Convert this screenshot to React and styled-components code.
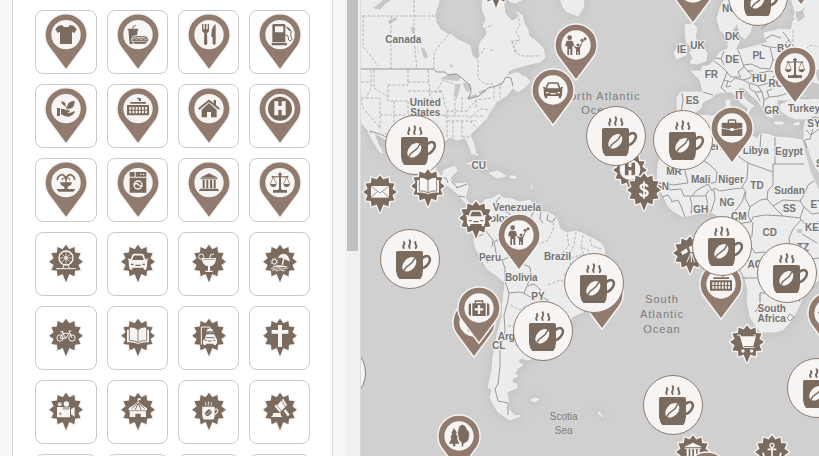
import React from "react";
import styled, { createGlobalStyle } from "styled-components";

const PIN = "#917b6e";
const DARK = "#7b6a5e";
const PALE = "#f6f5f3";

const GlobalStyle = createGlobalStyle`
  * { box-sizing: border-box; }
  html, body { margin: 0; padding: 0; overflow: hidden; background: #f7f7f7; }
`;

const Page = styled.div`
  display: flex;
  width: 819px;
  height: 456px;
  overflow: hidden;
  background: #f7f7f7;
  font-family: "Liberation Sans", Arial, sans-serif;
`;

const Sidebar = styled.aside`
  flex: none;
  display: flex;
  width: 361px;
  height: 456px;
  padding-left: 12px;
  border-right: 1px solid #dcdcdc;
`;

const Panel = styled.div`
  flex: none;
  width: 321px;
  height: 456px;
  margin-right: 12px;
  padding: 10px 0 0 22px;
  overflow: hidden;
  background: #fff;
  border: solid #d9d9d9;
  border-width: 0 1px;
`;

const IconGrid = styled.div`
  display: grid;
  grid-template-columns: 62px 61px 61px 61px;
  grid-auto-rows: 64px;
  gap: 10px;
`;

const Card = styled.button`
  display: flex;
  justify-content: center;
  align-items: flex-start;
  padding: 0;
  background: #fff;
  border: 1px solid #cacaca;
  border-radius: 8px;
`;

const CardDrawing = styled.svg`
  flex: none;
  display: block;
  width: 60px;
  height: 62px;
`;

const ScrollTrack = styled.div`
  width: 15px;
  height: 456px;
  padding: 0 2px;
  background: #f0f0f0;
`;

const ScrollThumb = styled.div`
  height: 251px;
  background: #c1c1c1;
`;

const MapArea = styled.main`
  position: relative;
  flex: 1;
  height: 456px;
  overflow: hidden;
  background: #d0d0d0;
`;

const MapDrawing = styled.svg`
  display: block;
  width: 458px;
  height: 456px;
`;

const MapLabel = styled.text`
  font-family: "Liberation Sans", Arial, sans-serif;
  font-size: ${(p) => (p.$sea ? p.$sea : 10)}px;
  font-weight: ${(p) => (p.$sea ? 400 : 700)};
  letter-spacing: ${(p) => (p.$spaced ? 1 : 0)}px;
  fill: ${(p) => (p.$sea ? "#7c7c7c" : "#737373")};
  stroke: ${(p) => (p.$sea ? "none" : "#efefef")};
  stroke-width: 2px;
  stroke-linejoin: round;
  paint-order: stroke;
`;

const MapMarker = styled.svg`
  position: absolute;
  left: ${(p) => p.$x - 391}px;
  top: ${(p) => p.$y - 30}px;
  width: 60px;
  height: 72px;
  overflow: visible;
`;

/* Icons are drawn on a grid of a third of a pixel, around the marker centre.
   f is the icon colour, b the colour behind it. */
const ln = (c, w = 3) => ({ fill: "none", stroke: c, strokeWidth: w });

const car = ({ f, b }) => (
  <g>
    <path fill="none" stroke={f} strokeWidth="5" d="M-21,-3 L-15,-19 Q-14,-21 -11,-21 H11 Q14,-21 15,-19 L21,-3" />
    <path fill={f} d="M-31,-9 h7 l2,4 h44 l2,-4 h7 l-3,5 l-1,20 q0,2 -2,2 v5 q-4,3 -8,0 v-5 h-34 v5 q-4,3 -8,0 v-5 q-2,0 -2,-2 l-1,-20z" />
    <path stroke={b} strokeWidth="4" d="M-21,8 h8 M13,8 h8 M-8,11 h16" />
  </g>
);

const bank = ({ f }) => (
  <g fill={f}>
    <path d="M-27,-15 L0,-28 L27,-15Z M-25,-13 h50 v3 h-50z M-27,18 h54 v3 h3 v4 h-60 v-4 h3z" />
    <path d="M-20,-9 h8 l-1,3 v20 l1,3 h-8 l1,-3 v-20z M-8,-9 h6 v26 h-7 l1,-3z M3,-9 h6 l1,26 h-7z M14,-9 h7 l-1,3 v20 l1,3 h-8 l1,-3z" />
  </g>
);

const book = ({ f, b }) => (
  <g>
    <path fill={f} d="M-33,-18 h66 v38 q-20,-2 -33,5 q-13,-7 -33,-5z" />
    <path fill={f} stroke={b} strokeWidth="2.5" d="M0,-17 Q-10,-28 -26,-25 V15 Q-10,13 0,21 Q10,13 26,15 V-25 Q10,-28 0,-17 V21" />
  </g>
);

const mug = ({ f, b }) => (
  <g>
    <path fill={f} d="M-37,-24 H33 Q39,-24 39,-18 V36 Q38,52 31,60 H-32 Q-40,52 -42,36 V-18 Q-42,-24 -37,-24Z" />
    <path {...ln(f, 7.5)} d="M38,-3 Q48,-12 56,-7 Q63,0 57,11 Q49,25 36,28" />
    <ellipse cx="-2" cy="16" rx="17" ry="25" transform="rotate(43 -2 16)" fill={b} />
    <path {...ln(f, 4.5)} d="M-19,35 C-12,16 3,24 15,-3" />
    <path {...ln(f, 6)} strokeLinecap="round" d="M-19,-33 q-3,-5 0,-9 q4,-5 1,-9 M-1,-33 q-4,-6 0,-11 q4,-6 0,-12 M17,-33 q4,-4 1,-9 q-4,-5 -2,-9" />
  </g>
);

const letterH = ({ f }) => (
  <path fill={f} d="M-17,-22 h12 v14 h10 v-14 h12 v42 h-12 v-17 h-10 v17 h-12z" />
);

const ICONS = {
  shirt: ({ f }) => (
    <path fill={f} d="M-12,-29 Q-9,-22 0,-22 Q9,-22 12,-29 L22,-27 Q28,-24 32,-16 L25,-5 L18,-9 V28 H-18 V-9 L-25,-5 L-32,-16 Q-28,-24 -22,-27Z" />
  ),
  food: ({ f, b }) => (
    <g>
      <path fill={f} d="M-31,-18 h32 v4 h-2 L-5,28 H-25 L-29,-14 h-2z" />
      <path {...ln(f)} d="M-16,-18 q-1,-9 9,-10" />
      <path fill={f} stroke={b} strokeWidth="3" d="M-18,12 Q-17,3 -6,3 H20 Q31,3 31,14 Q34,19 28,22 Q27,29 20,29 H-8 Q-15,29 -16,22 Q-20,18 -18,12Z" />
      <path {...ln(b, 2)} d="M-15,13 q4,-4 7,0 t7,0 t7,0 t7,0 t7,0 t7,0 M-14,20 H26 M-10,9 h32" />
    </g>
  ),
  cutlery: ({ f }) => (
    <g fill={f}>
      <path d="M-21,-32 h4 v16 h4 v-16 h5 v16 h4 v-16 h4 v18 q0,7 -6,9 l1,33 q-5,6 -10,0 l1,-33 q-7,-2 -7,-9z" />
      <path d="M20,-32 V28 q-4,5 -9,0 V7 H7 Q6,-23 20,-32Z" />
    </g>
  ),
  fuel: ({ f, b }) => (
    <g>
      <path fill={f} d="M-23,-28 q0,-4 4,-4 H11 q5,0 5,4 V23 H-23z M-25,25 H21 v7 H-25z" />
      <rect x="-15" y="-25" width="25" height="18" rx="2" fill={b} />
      <path {...ln(f, 3)} d="M18,-24 L34,-10 Q29,0 34,8 Q39,17 30,19 Q24,18 25,8 Q25,1 16,1" />
      <path {...ln(f, 5)} d="M22,-21 L31,-12" />
    </g>
  ),
  plant: ({ f }) => (
    <g fill={f}>
      <path d="M-27,-2 h9 v24 h-9z M-15,1 Q-6,-1 0,5 H8 Q13,6 11,9 L2,13 Q12,14 20,9 Q26,6 27,9 Q23,18 13,23 Q2,27 -15,17Z" />
      <path d="M4,0 Q1,-22 26,-24 Q27,-1 8,0Z M-15,-22 Q1,-21 -2,-9 Q-12,-9 -15,-22Z" />
      <path {...ln(f, 2.5)} d="M-7,-13 Q2,-9 3,3 M17,-15 L4,3" />
    </g>
  ),
  terminal: ({ f, b }) => (
    <g>
      <path fill={f} d="M-33,-11 H33 V20 H-33z M-23,-20 H24 v5 H-23z M-3,-33 l12,2 v8 l-6,1 v-5 l-6,-2z" />
      <path stroke={b} strokeWidth="8" strokeDasharray="5.5 4" d="M-26,-1 H28 M-26,10 H28" />
    </g>
  ),
  house: ({ f }) => (
    <g>
      <path fill={f} d="M-22,3 L0,-17 L23,3 V26 H6 V10 H-6 V26 H-22z M14,-26 h7 v17 l-7,-6z" />
      <path {...ln(f, 6)} d="M-31,1 L0,-24 L31,1" />
    </g>
  ),
  hospital: ({ f, b }) => (
    <g>
      <circle r="36" fill={f} />
      {letterH({ f: b })}
    </g>
  ),
  fountain: ({ f }) => (
    <g>
      <path {...ln(f, 5)} d="M-26,-8 Q-26,-20 -14,-24 Q-3,-25 0,-8 Q3,-25 14,-24 Q26,-20 26,-8" />
      <path {...ln(f, 3.5)} d="M-12,-7 q2,-7 8,-7 M12,-7 q-2,-7 -8,-7 M0,-20 V5" />
      <path fill={f} d="M-18,-1 H18 Q16,10 5,12 V19 H27 V23 Q22,24 22,27 H-22 Q-22,24 -27,23 V19 H-5 V12 Q-16,10 -18,-1Z" />
    </g>
  ),
  washer: ({ f, b }) => (
    <g>
      <path fill={f} d="M-25,-32 h15 v14 h-15z M-7,-32 h32 v14 h-32z M-25,-15 h50 v45 h-50z" />
      <circle cx="0" cy="7" r="14" fill={b} />
      <circle cx="0" cy="7" r="10" fill={f} />
      <path {...ln(b, 4)} d="M-11,6 Q-4,-1 1,6 T12,8" />
      <path fill={b} d="M7,-27 h4 v4 h-4z M15,-27 h4 v4 h-4z" />
    </g>
  ),
  bank,
  scales: ({ f }) => (
    <g>
      <path fill={f} d="M-2,-31 h4 v4 h4 v4 h-3 v42 l4,3 h14 v8 h-42 v-8 h14 l4,-3 v-42 h-3 v-4 h4z" />
      <path {...ln(f, 3.5)} d="M-25,-19 Q-12,-15 0,-20 Q12,-15 25,-19" />
      <path {...ln(f, 2)} d="M-20,-18 L-29,4 M-20,-18 L-11,4 M20,-18 L29,4 M20,-18 L11,4" />
      <path fill={f} d="M-30,4 h20 q-2,9 -10,9 t-10,-9z M10,4 h20 q-2,9 -10,9 t-10,-9z" />
    </g>
  ),
  wheel: ({ f }) => (
    <g>
      <circle cx="0" cy="-11" r="21" {...ln(f, 4)} />
      <circle cx="0" cy="-11" r="5" fill={f} />
      <path {...ln(f, 2)} d="M0,-32 V10 M-21,-11 H21 M-15,-26 L15,4 M15,-26 L-15,4" />
      <path {...ln(f, 3)} d="M-6,10 L-10,20 M6,10 L10,20 M-30,21 H30" />
    </g>
  ),
  car,
  cocktail: ({ f, b }) => (
    <g>
      <circle cx="-23" cy="-15" r="8" {...ln(f, 3)} />
      <path fill={f} d="M-22,-11 H21 Q20,13 3,14 V27 H11 V31 H-11 V27 H-3 V14 Q-20,12 -22,-11Z" />
      <path {...ln(f, 3)} d="M2,-10 L5,-21 L15,-23" />
      <path stroke={b} strokeWidth="2" d="M-17,-7 H16" />
    </g>
  ),
  beach: ({ f }) => (
    <g>
      <circle cx="-17" cy="0" r="7" {...ln(f, 3)} />
      <circle cx="-17" cy="0" r="10" fill="none" stroke={f} strokeWidth="3" strokeDasharray="3 4.8" />
      <path fill={f} d="M-7,-12 Q2,-26 15,-23 Q29,-17 29,0 L20,-5 L13,-8 L9,10 L5,9 L9,-10 L2,-12Z" />
      <path fill={f} d="M-22,15 Q0,6 25,16 V17 H-22z" />
      <path {...ln(f, 2.5)} d="M-28,21 q5,-5 10,0 t10,0 t10,0 t10,0 t10,0 M-24,26 q5,-4 10,0 t10,0 t10,0 t10,0" />
    </g>
  ),
  bike: ({ f }) => (
    <g {...ln(f, 3)}>
      <circle cx="-18" cy="7" r="9.5" />
      <circle cx="18" cy="7" r="9.5" />
      <path d="M-18,7 L-10,-7 H10 L-1,8 H-18 M-1,8 L-12,-12 M-17,-12 h9 M18,7 L9,-14 H16" />
    </g>
  ),
  book,
  carwash: ({ f, b }) => (
    <g>
      <path {...ln(f, 3)} d="M-23,27 V-26 H3 V-20" />
      <path fill={f} d="M-4,-21 h13 l4,8 h-21z M-13,13 L-9,-2 Q-8,-4 -5,-4 H13 Q16,-4 17,-2 L21,7 Q24,9 24,12 V24 H21 V28 H14 V24 H-9 V28 H-16 V24 H-18 V12Z" />
      <path stroke={b} strokeWidth="3" d="M-8,6 H16 M-12,14 h6 M13,14 h6 M-3,16 h11" />
      <path stroke={f} strokeWidth="2" strokeDasharray="2 2" d="M-8,-10 H15" />
    </g>
  ),
  cross: ({ f }) => (
    <path fill={f} d="M-6,-32 H6 V-17 H25 V-6 H6 V34 H-6 V-6 H-25 V-17 H-6z" />
  ),
  camera: ({ f, b }) => (
    <g fill={f}>
      <circle cx="-19" cy="-16" r="6" opacity=".85" />
      <circle cx="1" cy="-17" r="8" />
      <path d="M-27,-8 H12 V23 H-27z M15,-1 L26,-8 V21 L15,14z" />
      <path fill={b} opacity=".5" d="M-10,-8 H10 V0 H-10z" />
      <circle cx="-17" cy="12" r="3" fill={b} />
    </g>
  ),
  circus: ({ f, b }) => (
    <g fill={f}>
      <path d="M-1,-34 h9 v6 h-7 v5 Q12,-14 27,-4 V2 H24 V22 H8 V12 H-8 V22 H-25 V2 H-28 V-4 Q-12,-14 -1,-23z" />
      <path {...ln(b, 3)} d="M-2,-19 L-19,-3 M0,-19 L-8,0 M1,-19 L9,0 M3,-19 L20,-3" />
      <path {...ln(b, 2)} d="M-24,3 H24" />
    </g>
  ),
  coffee: (p) => <g transform="translate(-1 2) scale(.46)">{mug(p)}</g>,
  gavel: ({ f, b }) => (
    <g fill={f}>
      <path d="M-13,-9 L5,-28 L17,-9 L1,6z" />
      <path stroke={b} strokeWidth="2" d="M-18,-11 L-12,-16 L5,4 L-1,9z M4,-29 L10,-34 L22,-13 L16,-8z" />
      <path d="M11,3 L17,-1 L29,15 L23,20z M-21,10 H2 V16 L7,22 H-27 L-21,16z" />
    </g>
  ),
  family: ({ f }) => (
    <g fill={f}>
      <circle cx="-19" cy="-22" r="7" />
      <path d="M-26,-13 H-12 Q-8,-11 -6,2 L-11,4 V30 H-17 V12 H-21 V30 H-26 V4 H-32 Q-32,-10 -26,-13Z" />
      <circle cx="6" cy="0" r="4.5" />
      <path d="M-6,2 L1,6 H9 L16,-6 L18,-4 L12,10 V30 H7 V20 H4 V30 H0 V12 L-6,5z" />
      <path {...ln(f, 1.5)} d="M16,-4 L20,-13 M16,-4 L27,-16" />
      <circle cx="18" cy="-14" r="4.5" />
      <circle cx="27" cy="-19" r="4.5" />
    </g>
  ),
  briefcase: ({ f, b }) => (
    <g>
      <rect x="-11" y="-24" width="22" height="12" rx="3" {...ln(f, 4)} />
      <rect x="-31" y="-16" width="62" height="40" rx="4" fill={f} />
      <path {...ln(b, 2.5)} d="M-31,0 Q-15,5 0,5 Q15,5 31,0" />
      <path fill={b} d="M-5,0 h10 v9 h-10z" />
    </g>
  ),
  envelope: ({ f, b }) => (
    <g>
      <rect x="-27" y="-18" width="54" height="35" fill={f} />
      <path {...ln(b, 2)} d="M-27,-17 L0,3 L27,-17 M-27,16 L-7,-2 M27,16 L7,-2" />
    </g>
  ),
  letterH: ({ f, b }) => (
    <g>
      <circle r="31" cy="-1" fill={f} />
      <g transform="translate(0 -2) scale(.9)">{letterH({ f: b })}</g>
    </g>
  ),
  dollar: ({ f }) => (
    <g>
      <path {...ln(f, 7)} d="M11,-10 Q8,-17 -1,-17 Q-10,-16 -10,-9 Q-9,-3 0,0 Q11,3 11,10 Q9,18 0,18 Q-10,18 -12,9" />
      <path stroke={f} strokeWidth="5" d="M0,-26 V27" />
    </g>
  ),
  luggage: ({ f, b }) => (
    <g>
      <path {...ln(f, 4)} d="M-11,-14 V-21 H11 V-14" />
      <path fill={f} d="M-20,-14 H20 V24 H-20z M-31,-8 Q-31,-14 -24,-14 V24 Q-31,24 -31,18z M31,-8 Q31,-14 24,-14 V24 Q31,24 31,18z" />
      <path stroke={b} strokeWidth="7" d="M0,-9 V18 M-13,4 H13" />
    </g>
  ),
  trees: ({ f, b }) => (
    <g fill={f}>
      <path d="M-15,-24 L-6,-9 H-10 L-3,5 H-7 L1,23 H-11 V31 H-18 V23 H-30 L-22,5 H-26 L-20,-9 H-23z" />
      <path stroke={b} strokeWidth="2" d="M-2,-20 Q0,-36 13,-34 Q22,-31 24,-20 Q34,-13 31,-1 Q31,14 22,19 L14,24 V32 H7 V20 Q-4,13 -2,2 Q-8,-8 -2,-20Z" />
    </g>
  ),
  cart: ({ f }) => (
    <g>
      <path {...ln(f, 3)} d="M-30,-21 H-20 L-10,16 H22 M27,-21 H20" />
      <path fill={f} d="M-21,-17 H27 L19,12 H-12z" />
      <circle cx="-12" cy="27" r="5" fill={f} />
      <circle cx="14" cy="27" r="5" fill={f} />
    </g>
  ),
  anchor: ({ f }) => (
    <g>
      <circle cx="0" cy="-20" r="6" {...ln(f, 4)} />
      <path {...ln(f, 5)} d="M0,-14 V24 M-13,-8 H13 M-27,2 Q-24,24 0,25 Q24,24 27,2" />
    </g>
  ),
  telescope: ({ f }) => (
    <g>
      <path fill={f} d="M-28,-3 L-10,-14 L-6,-3 L-22,6z M-4,-18 L14,-26 L18,-4 L2,-2z" />
      <path {...ln(f, 3)} d="M3,0 L-10,28 M4,0 V28 M5,0 L14,28" />
    </g>
  ),
};

/* Twelve-pointed burst whose bottom point is drawn out into the marker tip. */
const starPath = () => {
  const pts = [];
  for (let i = 0; i < 24; i++) {
    const a = (i * Math.PI) / 12;
    const r = i === 12 ? 62 : i % 2 ? 38.5 : 50.5;
    pts.push(`${(r * Math.sin(a)).toFixed(1)},${(-r * Math.cos(a)).toFixed(1)}`);
  }
  return `M${pts.join("L")}Z`;
};
const STAR = starPath();
const TEARDROP = "M0,102 L-48.6,37 A61,61 0 1 1 48.6,37 Z";

const MarkerArt = ({ kind, icon }) => {
  if (kind === "disc") {
    return (
      <g>
        <circle r="88.5" fill={PALE} stroke={PIN} strokeWidth="3" />
        {mug({ f: DARK, b: PALE })}
      </g>
    );
  }
  const draw = ICONS[icon];
  if (kind === "pin") {
    return (
      <g>
        <path d={TEARDROP} fill={PALE} stroke={PALE} strokeWidth="9" />
        <path d={TEARDROP} fill={PIN} />
        <circle r="44" fill={PALE} />
        {draw && draw({ f: DARK, b: PALE })}
      </g>
    );
  }
  return (
    <g>
      <path d={STAR} fill={PALE} stroke={PALE} strokeWidth="8" strokeLinejoin="round" />
      <path d={STAR} fill={DARK} />
      {draw && draw({ f: PALE, b: DARK })}
    </g>
  );
};

const PIN_CARDS = ["shirt", "food", "cutlery", "fuel", "plant", "terminal", "house", "hospital", "fountain", "washer", "bank", "scales"];
const STAR_CARDS = ["wheel", "car", "cocktail", "beach", "bike", "book", "carwash", "cross", "camera", "circus", "coffee", "gavel"];

const MARKERS = [
  ["pin", 693, -12, "house"],
  ["pin", 801, -30, "house"],
  ["star", 496, -13, "cross"],
  ["pin", 576.3, 44.7, "family"],
  ["pin", 553, 89.7, "car"],
  ["disc", 758, -4],
  ["pin", 795, 68, "scales"],
  ["disc", 415, 145],
  ["star", 428, 186, "book"],
  ["star", 380, 192, "envelope"],
  ["star", 476, 217.5, "car"],
  ["star", 630, 170, "letterH"],
  ["disc", 616, 136],
  ["star", 644, 189.5, "dollar"],
  ["disc", 683, 139.8],
  ["pin", 732, 127.7, "briefcase"],
  ["pin", 519, 235.3, "family"],
  ["disc", 410, 259],
  ["pin", 602, 293.5, "plant"],
  ["disc", 594, 283],
  ["pin", 474, 322, "coffee"],
  ["pin", 479, 307.5, "luggage"],
  ["disc", 543, 331],
  ["star", 690.3, 253, "telescope"],
  ["pin", 721, 284.3, "terminal"],
  ["disc", 722, 245.8],
  ["pin", 829, 313, "house"],
  ["disc", 787.3, 273],
  ["star", 747, 342, "cart"],
  ["disc", 673, 405],
  ["disc", 817, 388],
  ["disc", 336, 373],
  ["pin", 459, 436.3, "trees"],
  ["star", 693, 451.7, "bank"],
  ["star", 772, 452, "anchor"],
  ["pin", 707, 473, "house"],
];

const LABELS = [
  ["Canada", 403.3, 42.7], ["United", 425.3, 106], ["States", 425.3, 116.3], ["CU", 478.7, 169.2],
  ["Venezuela", 517, 211], ["Colombia", 505.5, 221.5], ["Peru", 490, 261.3], ["Bolivia", 521.3, 281.3],
  ["Brazil", 557.5, 260], ["PY", 538, 299.7], ["Argentina", 521, 340], ["CL", 498.7, 348.7],
  ["IE", 681.7, 53.3], ["UK", 697.5, 49], ["NO", 729.5, 12], ["DK", 732.3, 40.3], ["DE", 732.3, 63.3],
  ["PL", 758.8, 59], ["BY", 784, 52], ["FR", 711.3, 77.7], ["HU", 759.3, 81.5], ["RO", 776, 86.5],
  ["IT", 739.7, 99.3], ["ES", 692.3, 104], ["GR", 771.7, 114.3], ["Turkey", 804, 112.3],
  ["SY", 814, 127.3], ["Algeria", 711, 149.5], ["Libya", 755.7, 153.5], ["Egypt", 789, 154.8],
  ["MR", 674, 175.3], ["SN", 662, 189.5], ["Mali", 700.7, 182.8], ["Niger", 731, 182.8], ["TD", 757, 188.5],
  ["Sudan", 789.5, 193.7], ["NG", 727, 205.7], ["GH", 700.7, 213.3], ["CM", 738.7, 219.5],
  ["SS", 789.3, 212.3], ["ET", 817, 208], ["CD", 769.7, 236], ["KE", 812, 231.3], ["TZ", 803, 250.5],
  ["AO", 755, 267.5], ["SA", 823, 167], ["South", 771.7, 311.5], ["Africa", 771.7, 321.8],
];

const SEAS = [
  ["North Atlantic", 600.7, 99.7, 11], ["Ocean", 600, 114, 11],
  ["South", 662, 303, 11], ["Atlantic", 662, 318, 11], ["Ocean", 662, 332.5, 11],
  ["Scotia", 563.7, 420.3, 10], ["Sea", 563.7, 434, 10],
];

const LAND = [
  // North America down to Panama
  "M355,-5 H441 L437,8 L435,14 L436,22 L440,29 L447,34 L452,35 L458,40 L465,43 L470,46 L472,55 L477,60 L480,56 L479,46 L481,41 L486,36 L487,31 L483,27 L486,19 L482,9 L483,-5 H503 L505,13 L508,17 L512,21 L518,18 L517,12 L522,15 L524,23 L528,30 L529,36 L535,40 L543,48 L545,57 L540,62 L530,64 L520,67 L510,70 L506,77 L513,73 L519,70 L522,74 L527,78 L530,82 L524,88 L518,92 L513,88 L507,95 L500,100 L496,102 L493,108 L489,113 L487,118 L477,128 L470,135 L475,147 L475,154 L472,154 L468,143 L465,138 L457,140 L450,137 L443,142 L436,149 L434,160 L436,170 L442,177 L444,170 L455,166 L457,171 L450,178 L454,184 L467,183 L468,188 L465,198 L470,204 L477,205 L479,209 L473,211 L469,207 L463,200 L457,193 L447,185 L433,179 L420,173 L405,163 L396,152 L389,142 L380,136 L374,133 L378,144 L383,153 L380,152 L373,141 L368,131 L361,122 L355,118Z",
  "M480,207 L485,200 L493,198 L499,194 L503,198 L512,199 L520,202 L530,200 L535,208 L541,212 L547,212 L553,215 L557,219 L560,229 L567,233 L575,231 L582,233 L592,238 L602,244 L605,251 L603,262 L597,270 L594,285 L592,300 L583,312 L572,317 L567,328 L561,338 L550,348 L535,358 L527,360 L521,358 L518,362 L523,365 L518,368 L515,373 L518,376 L512,379 L513,383 L517,384 L517,388 L507,392 L508,398 L509,409 L514,415 L520,416 L510,420 L498,412 L493,404 L490,397 L492,390 L488,387 L492,370 L493,357 L497,335 L502,317 L503,300 L505,283 L496,275 L488,270 L482,260 L475,247 L474,240 L478,230 L483,222Z",
  "M559,-5 L563,7 L567,12 L578,16 L584,7 L583,-5Z",
  "M467,164 L474,161 L481,163 L488,169 L479,168 L474,164Z M489,173 L498,171 L506,176 L497,178Z M510,176 h5 v2 h-5z M474,152 l3,2 v2 z M508,-5 h10 l4,5 l-7,3 l-6,-2z",
  // British Isles
  "M685,25 L693,24 L697,28 L695,38 L700,43 L707,53 L706,61 L697,64 L690,63 L693,58 L690,53 L692,48 L686,42Z M680,43 L687,47 L686,55 L677,59 L674,53Z",
  // Scandinavia, continental Europe and the Middle East
  "M727,-5 L720,8 L717,19 L720,30 L725,35 L732,31 L737,23 L740,35 L745,39 L750,33 L752,25 L758,18 L760,-5Z M728,36 L735,34 L739,42 L735,50 L728,50Z",
  "M824,-5 H790 L795,12 L791,30 L780,29 L764,33 L765,39 L768,42 L759,45 L747,48 L738,50 L727,49 L720,52 L714,61 L708,66 L703,66 L701,71 L691,71 L700,80 L703,92 L681,92 L677,97 L677,110 L682,115 L692,115 L701,108 L703,102 L711,98 L717,93 L726,92 L732,92 L740,102 L748,108 L747,115 L751,108 L754,106 L748,102 L740,93 L738,87 L744,88 L750,94 L758,101 L763,109 L767,116 L773,118 L770,109 L777,106 L777,100 L789,100 L795,94 L804,96 L819,98 L824,97Z",
  "M780,105 L793,99 L808,100 L824,97 V180 L814,165 L806,147 L804,140 L804,127 L806,119 L796,119 L788,116 L781,111Z M736,112 L745,112 L744,118Z M726,100 h4 v8 h-4z M775,122 h8 v2 h-8z M793,124 l6,-2 v3z",
  // Africa
  "M684,118 L700,115 L712,116 L725,113 L735,114 L736,122 L741,130 L750,134 L757,139 L760,134 L768,134 L775,137 L790,138 L802,140 L805,150 L812,170 L824,190 V275 L812,286 L803,297 L797,311 L790,322 L783,330 L775,332 L761,332 L755,325 L750,317 L747,300 L748,292 L745,278 L740,267 L738,245 L732,228 L728,218 L720,217 L711,212 L700,213 L683,217 L673,211 L668,206 L662,193 L657,182 L658,165 L663,146 L673,130Z",
  "M530,400 l5,-2 l4,1 l-4,3z M598,412 l2,1 l3,4 l-3,-2z M513,177 h3 v1 h-3z M531,185 l1,4z",
];

const WATER = [
  // Great Lakes, northern lakes and inland seas
  "M440,79 L447,75 L454,73 L461,77 L458,81 L449,80Z M455,84 L461,84 L459,91 L457,99 L454,96Z M463,82 L470,84 L472,90 L467,92 L464,87Z M467,97 L476,94 L478,96 L469,99Z M478,92 L485,89 L486,92 L479,94Z",
  "M373,8 L381,2 L384,-1 L391,0 L385,4 L380,10Z M421,47 l4,2 l3,8 l-3,2 l-3,-6z M388,21 l8,-4 l1,3 l-8,4z M411,27 l3,0 l1,6 l-3,0z M417,48 l2,4 l-1,2z M450,64 l3,1 l-1,3 l-2,-1z",
  "M508,74 L514,69 L528,66 L535,66 L530,72 L523,76 L518,72Z",
  "M801,95 L803,86 L812,82 L824,86 V99 L815,99Z M815,71 L824,67 V81 L818,81Z M795,12 L803,10 L805,17 L798,22Z",
  "M797,229 h5 v4 h-5z",
];

const PROVINCES = [
  "M363,16 H436 M363,15 V47 L370,55 L378,66 M391,16 V69 M414,0 V40 L417,69 M434,69 V52 L449,34 M478,60 V78 L485,84 L493,84",
  "M371,70 V88 L366,98 M361,82 H371 M374,70 V88 L388,97 M388,85 H408 V70 M388,85 V101 H408 M408,82 H429 M408,91 H430 M428,70 L430,96 L436,103 M361,98 H380 V130 M394,101 V133 M380,115 H405 M408,101 V115 H447 M361,98 L363,108 L380,128 M430,92 H443 M443,97 L447,111 H466 M447,111 V138 M455,98 V116 M462,97 V112 M443,116 H484 M447,121 H476 M453,121 V138 M462,121 V137 M466,112 L476,100 L492,98 M470,118 L480,109 L490,110 M476,100 V108 M494,86 V100 M500,82 V98 M453,84 L443,80 L438,88 L443,95 M470,121 L477,128 M385,133 L394,145 M462,137 H470 M434,91 H442",
  "M518,14 L520,25 L516,31 L520,39 L513,46 L518,54 L523,56 H541 M512,41 L516,55 M554,218 L553,230 L548,240 M567,234 L569,246 L563,252 M576,232 L574,245 L569,255 M583,235 L581,247 L590,251 M590,239 L592,246 L602,249 M563,252 L571,258 L570,270 L562,276 M548,240 L540,244 L535,238 M548,285 L560,280 L569,284 M540,310 L552,308 L561,313 M505,228 L500,234 L497,243 M511,305 L520,310 L527,305 M508,326 H525 M515,345 L530,346 M581,247 L585,258 M571,258 L584,254",
  "M365,129 L373,134 M398,135 L400,145 M485,48 l-4,4 l3,2 M490,50 h3 M484,29 l9,-5 M511,42 L516,40 L520,42 M793,20 L805,8 M793,30 V50 M800,55 L810,45 L819,47 M777,0 L781,10 M760,293 V305 M790,290 L800,284",
];

const BORDERS = [
  "M361,69 H433 L437,72 L445,72 L448,75 L457,74 L464,80 L470,85 L471,92 L468,99 L479,96 L488,88 L496,86 L502,84 L506,77 L511,78 L513,86",
  "M370,131 L380,134 L390,139 M443,178 L446,178 L448,183 M451,181 L457,187 M456,188 L462,186 L467,184 M459,196 L465,197 M470,205 L471,209",
  "M500,197 L496,202 L499,210 L507,212 L513,217 L511,227 M480,228 L486,231 L493,240 L492,247 M478,236 L482,235 L486,231 M511,227 L502,231 L500,238 L494,242 L496,253 L502,260 M535,209 L531,217 L536,222 L538,230 L527,233 L520,228 M541,212 L540,219 L543,223 M548,214 L547,220 L552,222 L556,218 M502,260 L505,268 L505,281 M502,260 L510,257 L520,263 L530,267 L531,278 L527,285 M505,281 L509,293 L508,301 L504,315 L505,331 L500,350 L500,366 L498,384 L495,389 L498,401 L508,403 M508,403 V415 M509,293 L518,292 L524,293 L527,286 L534,284 L540,289 L540,296 L548,300 L545,308 L533,308 M524,293 L535,300 M546,320 L555,328 L561,335 M484,258 L488,263",
  // Europe
  "M682,93 L683,100 L681,113 M703,92 L713,95 M714,61 L722,67 L727,72 L724,80 L721,88 L726,92 M715,58 L721,59 L724,51 M721,59 L724,65 M738,50 L741,58 L744,67 L738,72 L741,77 L731,77 L727,72 M724,80 L731,82 L735,78 L743,80 L750,78 L752,75 L744,67 M744,65 L751,64 L760,68 L770,69 L773,60 L770,47 L761,45 M770,47 L780,48 L789,40 L783,32 M765,39 L772,35 L781,38 M773,60 L784,60 L795,62 M752,75 L760,73 L770,71 L777,73 M743,80 L749,83 L750,89 L755,92 L760,101 M750,83 L758,86 L769,83 L776,73 L787,76 L792,86 M758,86 L762,92 L764,100 L769,97 L779,96 L791,92 M764,100 L763,108 M769,97 L767,91 L772,89 M755,92 L762,92 M747,71 L753,71 M728,81 L726,87 L731,86",
  "M789,40 L796,50 L793,62 M763,0 L770,12 L767,25 L761,29 M806,120 L815,117 L819,118 M806,130 L811,135 L819,129 M805,140 L810,139 L813,129 M804,140 L807,148",
  // Africa
  "M681,145 L672,147 V156 H661 M681,145 L710,165 L717,172 M741,130 L739,139 L735,144 L739,157 L748,163 L773,172 M735,144 L733,133 M775,137 V164 H804 M775,164 H773 V185 L768,190 L767,199 L773,206 M748,163 L747,179 L742,187 L746,192 L745,198 M681,155 L688,183 L673,185 L669,184 L669,190 L658,187 M717,172 L716,182 L708,184 L697,190 L692,196 L684,196 L681,189 L669,190 M708,184 L712,191 L714,188 L720,191 L733,189 L742,188 M714,190 L715,199 L711,212 M706,195 L709,212 M690,197 L692,205 L691,214 M692,196 H705 L709,190 M671,202 L678,200 L681,206 L685,217 M662,197 L668,195 L672,201 M745,192 L742,202 L736,210 L731,214 M745,198 L750,207 L760,200 L767,199 M750,207 L748,215 L751,222 L734,224 M773,206 L783,200 L800,201 L804,195 L808,185 L814,181 M773,206 L783,216 L800,218 L804,207 L800,201 M751,222 L753,217 L765,215 L783,216 M753,222 L752,236 L745,245 M800,218 L805,224 L819,222 M801,220 L793,229 L789,238 L790,250 L794,257 M802,234 L817,243 M740,249 L752,248 L755,253 L765,252 L770,258 L778,261 M741,278 H762 L770,280 M760,293 V305 L755,312 M770,280 V293 L760,293 M794,257 L805,260 L819,258 M790,290 L797,294 L800,302 M787,318 L790,314 L794,317 L790,321 L787,318 M770,293 L779,299 L789,290 M684,115 L698,125 M804,207 L812,214 L819,213 M761,134 L760,148",
];

function WorldMap() {
  return (
    <MapDrawing viewBox="361 0 458 456">
      <defs>
        <filter id="coast" x="-10%" y="-10%" width="120%" height="120%">
          <feGaussianBlur stdDeviation="4" />
        </filter>
      </defs>
      <g filter="url(#coast)" fill="#bebebe" stroke="#bebebe" strokeWidth="4" opacity=".75">
        {LAND.map((d, i) => <path key={i} d={d} />)}
      </g>
      <g fill="#ececec" stroke="#f1f1f1" strokeWidth=".8" strokeLinejoin="round">
        {LAND.map((d, i) => <path key={i} d={d} />)}
      </g>
      <g fill="#c8c8c8">
        {WATER.map((d, i) => <path key={i} d={d} />)}
      </g>
      <path d="M803,143 L806,143 L811,158 L819,176 V190 L810,170Z" fill="#cbcbcb" />
      <g fill="none" stroke="#b6b6b6" strokeWidth="1" strokeDasharray="3 1.6">
        {PROVINCES.map((d, i) => <path key={i} d={d} />)}
      </g>
      <g fill="none" stroke="#929292" strokeWidth=".95" strokeLinejoin="round">
        {BORDERS.map((d, i) => <path key={i} d={d} />)}
      </g>
      {SEAS.map(([t, x, y, size], i) => (
        <MapLabel key={i} x={x} y={y} textAnchor="middle" $sea={size} $spaced={size === 11}>{t}</MapLabel>
      ))}
      {LABELS.map(([t, x, y], i) => (
        <MapLabel key={i} x={x} y={y} textAnchor="middle">{t}</MapLabel>
      ))}
    </MapDrawing>
  );
}

export default function App() {
  return (
    <Page>
      <GlobalStyle />
      <Sidebar>
        <Panel>
          <IconGrid>
            {PIN_CARDS.map((icon) => (
              <Card key={icon} aria-label={icon}>
                <CardDrawing viewBox="-90 -71 180 186"><MarkerArt kind="pin" icon={icon} /></CardDrawing>
              </Card>
            ))}
            {STAR_CARDS.map((icon) => (
              <Card key={icon} aria-label={icon}>
                <CardDrawing viewBox="-90 -86 180 186"><MarkerArt kind="star" icon={icon} /></CardDrawing>
              </Card>
            ))}
            {[0, 1, 2, 3].map((n) => <Card key={n} />)}
          </IconGrid>
        </Panel>
        <ScrollTrack><ScrollThumb /></ScrollTrack>
      </Sidebar>
      <MapArea>
        <WorldMap />
        {MARKERS.map(([kind, x, y, icon], i) => (
          <MapMarker key={i} $x={x} $y={y} viewBox="-90 -90 180 216">
            <MarkerArt kind={kind} icon={icon} />
          </MapMarker>
        ))}
      </MapArea>
    </Page>
  );
}
